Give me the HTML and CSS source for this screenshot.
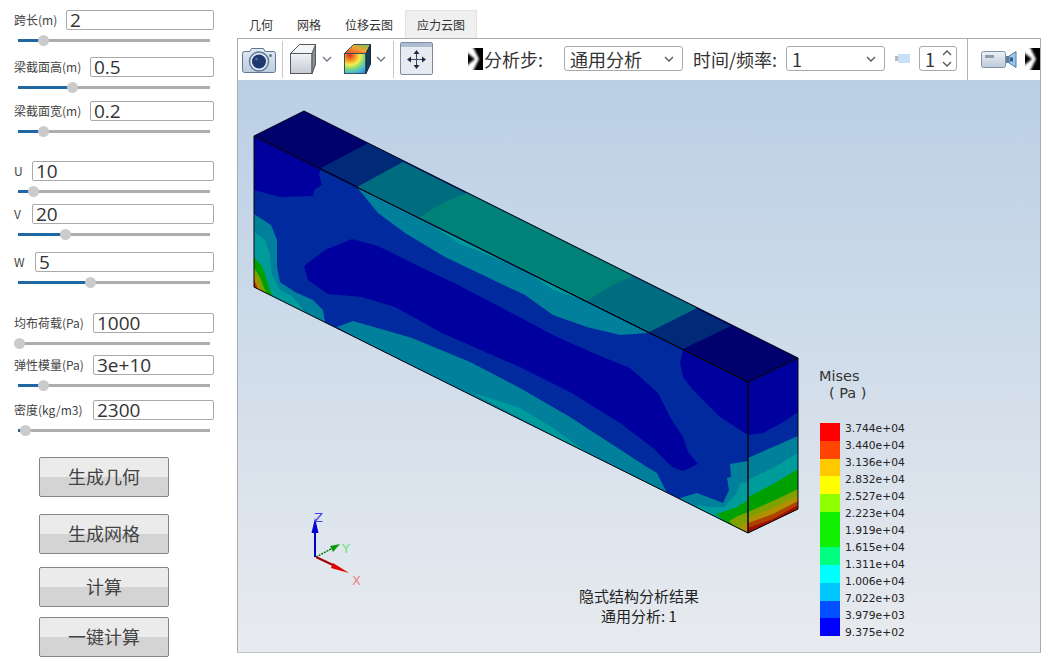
FILE: index.html
```html
<!DOCTYPE html>
<html lang="zh">
<head>
<meta charset="utf-8">
<title>隐式结构分析</title>
<link rel="stylesheet" href="styles.css">
</head>
<body>
<div class="app">
  <aside class="sidebar">
    <div class="param"><div class="row"><span class="label w52">跨长(m)</span><span class="input">2</span></div>
      <div class="slider"><i class="fill" style="width:24px"></i><i class="thumb"></i><i class="rest"></i></div></div>
    <div class="param mt10"><div class="row"><span class="label w76">梁截面高(m)</span><span class="input">0.5</span></div>
      <div class="slider"><i class="fill" style="width:53px"></i><i class="thumb"></i><i class="rest"></i></div></div>
    <div class="param mt7"><div class="row"><span class="label w76">梁截面宽(m)</span><span class="input">0.2</span></div>
      <div class="slider"><i class="fill" style="width:24px"></i><i class="thumb"></i><i class="rest"></i></div></div>
    <div class="param mt23"><div class="row"><span class="label w18">U</span><span class="input">10</span></div>
      <div class="slider"><i class="fill" style="width:14px"></i><i class="thumb"></i><i class="rest"></i></div></div>
    <div class="param mt6"><div class="row"><span class="label w18">V</span><span class="input">20</span></div>
      <div class="slider"><i class="fill" style="width:46px"></i><i class="thumb"></i><i class="rest"></i></div></div>
    <div class="param mt11"><div class="row"><span class="label w21">W</span><span class="input">5</span></div>
      <div class="slider"><i class="fill" style="width:71px"></i><i class="thumb"></i><i class="rest"></i></div></div>
    <div class="param mt24"><div class="row"><span class="label w79">均布荷载(Pa)</span><span class="input">1000</span></div>
      <div class="slider"><i class="fill" style="width:0"></i><i class="thumb"></i><i class="rest"></i></div></div>
    <div class="param mt5"><div class="row"><span class="label w79">弹性模量(Pa)</span><span class="input">3e+10</span></div>
      <div class="slider"><i class="fill" style="width:24px"></i><i class="thumb"></i><i class="rest"></i></div></div>
    <div class="param mt8"><div class="row"><span class="label w79">密度(kg/m3)</span><span class="input">2300</span></div>
      <div class="slider"><i class="fill" style="width:6px"></i><i class="thumb"></i><i class="rest"></i></div></div>
    <button class="btn first">生成几何</button>
    <button class="btn gap17">生成网格</button>
    <button class="btn gap13">计算</button>
    <button class="btn gap10">一键计算</button>
  </aside>

  <main class="content">
    <nav class="tabs">
      <span class="tab">几何</span>
      <span class="tab">网格</span>
      <span class="tab">位移云图</span>
      <span class="tab active">应力云图</span>
    </nav>
    <section class="panel">
      <div class="toolbar">
        <svg class="ic-camera" viewBox="0 0 34 30">
          <defs>
            <linearGradient id="camBody" x1="0" y1="0" x2="0" y2="1"><stop offset="0" stop-color="#e4eaf2"/><stop offset="1" stop-color="#bccbdd"/></linearGradient>
          </defs>
          <path d="M2.500 7.500H8l1.500-3h12l1.500 3h8.500a2 2 0 0 1 2 2v17a2 2 0 0 1-2 2H2.500a2 2 0 0 1-2-2v-17a2 2 0 0 1 2-2z" fill="url(#camBody)" stroke="#5d7898"/>
          <circle cx="17" cy="17.500" r="9.500" fill="#dfe8f2" stroke="#5f7b9c" stroke-width="1.500"/>
          <circle cx="17" cy="17.500" r="7" fill="#1d3a70"/>
          <circle cx="14.500" cy="15" r="1.500" fill="#4a6aa0"/>
          <circle cx="28.500" cy="11.500" r="1.500" fill="#5f7b9c"/>
        </svg>
        <span class="sep ml6"></span>
        <svg class="ic-cube" viewBox="0 0 26 30">
          <defs>
            <linearGradient id="cubeFront" x1="0" y1="0" x2="0" y2="1"><stop offset="0" stop-color="#f2f3f6"/><stop offset="1" stop-color="#c4c9d2"/></linearGradient>
          </defs>
          <path d="M0.500 9.500 9.500 0.500H25.500V20L22 29.500Z" fill="#f4f5f7" stroke="#55585f"/>
          <rect x="0.500" y="9.500" width="21.500" height="20" fill="url(#cubeFront)" stroke="#55585f"/>
          <path d="M22 9.500 25.500 0.500V20L22 29.500Z" fill="#8b8e94" stroke="#55585f"/>
        </svg>
        <svg class="chev ml6" viewBox="0 0 10 6"><path d="M1 1l4 4 4-4" fill="none" stroke="#6b7683" stroke-width="1.300"/></svg>
        <svg class="ic-contour ml12" viewBox="0 0 27 30">
          <defs>
            <radialGradient id="heat" cx="0.250" cy="0.100" r="1.050">
              <stop offset="0" stop-color="#e02a20"/><stop offset="0.250" stop-color="#f59a20"/><stop offset="0.450" stop-color="#f4ee50"/><stop offset="0.650" stop-color="#80d878"/><stop offset="0.850" stop-color="#40b8e0"/><stop offset="1" stop-color="#3090d8"/>
            </radialGradient>
            <linearGradient id="heatTop" x1="0" y1="1" x2="1" y2="0"><stop offset="0" stop-color="#e84030"/><stop offset="0.500" stop-color="#f0a030"/><stop offset="1" stop-color="#70c860"/></linearGradient>
          </defs>
          <path d="M0.500 9.500 9.500 0.500H26.500L22 9.500Z" fill="url(#heatTop)" stroke="#3a5058"/>
          <rect x="0.500" y="9.500" width="21.500" height="20" fill="url(#heat)" stroke="#3a5058"/>
          <path d="M22 9.500 26.500 0.500V20L22 29.500Z" fill="#12405a" stroke="#223"/>
        </svg>
        <svg class="chev ml5" viewBox="0 0 10 6"><path d="M1 1l4 4 4-4" fill="none" stroke="#6b7683" stroke-width="1.300"/></svg>
        <span class="sep ml7"></span>
        <svg class="ic-move ml6" viewBox="0 0 33 33">
          <rect x="0.500" y="0.500" width="32" height="32" rx="1.500" fill="#e6ebf2" stroke="#7d8ea3"/>
          <rect x="1" y="1" width="31" height="4" fill="#aebcd0"/>
          <path d="M16.500 9.500v16M8.500 17.500h16" stroke="#36475e" stroke-width="1"/>
          <path d="M16.500 8l3 4h-6zM16.500 27l-3-4h6zM7 17.500l4-3v6zM26 17.500l-4-3v6z" fill="#1d2c44"/>
        </svg>
        <svg class="ic-broken ml35" viewBox="0 0 15 22">
          <defs><filter id="soft" x="-30%" y="-30%" width="160%" height="160%"><feGaussianBlur stdDeviation="0.900"/></filter></defs>
          <rect width="15" height="22" fill="#000"/>
          <path d="M-3 -3H4L11 11 4 25H-3Z" fill="#fff" filter="url(#soft)"/>
          <path d="M-3 3 7 11-3 19Z" fill="#000" filter="url(#soft)"/>
        </svg>
        <span class="tool-label w61 ml1">分析步:</span>
        <div class="select w119 ml19"><span>通用分析</span><svg class="chev" viewBox="0 0 10 6"><path d="M1 1l4 4 4-4" fill="none" stroke="#555" stroke-width="1.300"/></svg></div>
        <span class="tool-label w85 ml10">时间/频率:</span>
        <div class="select w99 ml8"><span>1</span><svg class="chev" viewBox="0 0 10 6"><path d="M1 1l4 4 4-4" fill="none" stroke="#555" stroke-width="1.300"/></svg></div>
        <div class="mini ml10"><i class="mini-grip"></i><i class="mini-box"></i></div>
        <div class="spin ml9"><span>1</span>
          <div class="spin-arrows">
            <svg class="chev" viewBox="0 0 10 6"><path d="M1 5l4-4 4 4" fill="none" stroke="#555" stroke-width="1.300"/></svg>
            <svg class="chev" viewBox="0 0 10 6"><path d="M1 1l4 4 4-4" fill="none" stroke="#555" stroke-width="1.300"/></svg>
          </div>
        </div>
        <span class="sep sep-full ml10"></span>
        <svg class="ic-video ml13" viewBox="0 0 36 22">
          <defs><linearGradient id="vid" x1="0" y1="0" x2="0" y2="1"><stop offset="0" stop-color="#eef1f5"/><stop offset="1" stop-color="#bcc8d6"/></linearGradient></defs>
          <rect x="0.500" y="3.500" width="24" height="16" rx="2" fill="url(#vid)" stroke="#7c93ad"/>
          <rect x="4" y="7" width="9" height="3" fill="#8f9cad"/>
          <path d="M25 8h3v7h-3z" fill="#5c7d9c"/>
          <path d="M28 8 35 3.500V19.500L28 15Z" fill="#9cc6e8" stroke="#4f7da3"/>
          <path d="M29 9.500h3v4h-3z" fill="#2d5f86"/>
        </svg>
        <svg class="ic-broken ml8" viewBox="0 0 15 22">
          <rect width="15" height="22" fill="#000"/>
          <path d="M-3 -3H4L11 11 4 25H-3Z" fill="#fff" filter="url(#soft)"/>
          <path d="M-3 3 7 11-3 19Z" fill="#000" filter="url(#soft)"/>
        </svg>
      </div>

      <div class="viewport">
        <svg class="scene" viewBox="238 80 802 572">
          <defs>
            <clipPath id="frontFace"><polygon points="254,136 748,382 748,533 254,287"/></clipPath>
            <clipPath id="rightFace"><polygon points="748,382 798,358 798,509 748,533"/></clipPath>
          </defs>
          <!-- top face -->
          <polygon points="254,136 304,111 798,358 748,382" fill="#00006e"/>
          <polygon points="321,168 368,143 731,326 683,349" fill="#002a78"/>
          <polygon points="357,187 403,162 697,308 649,332" fill="#006c80"/>
          <path d="M420,217 Q445,200 467,193 L633,276 Q610,285 587,301 Z" fill="#008278"/>

          <!-- front face -->
          <g clip-path="url(#frontFace)">
            <rect x="250" y="130" width="500" height="410" fill="#002a9e"/>
            <polygon points="254,136 321,168 319,175 322,185 314,190 313,196 280,197 254,190" fill="#00009e"/>
            <polygon points="683,350 680,363 683,377 693,390 720,417 748,435 748,382" fill="#00009e"/>
            <polygon points="304,266 325,250 352,239 378,246 412,263 458,285 525,320 553,335 593,353 630,368 658,393 670,417 683,437 688,452 698,464 683,471 672,467 653,448 620,423 570,392 520,367 458,340 442,333 395,307 362,297 328,294 308,280" fill="#00009e"/>
            <polygon points="357,187 378,213 405,233 445,257 525,295 553,315 587,327 620,335 648,333" fill="#00809a"/>
            <polygon points="422,218 458,243 525,270 553,290 583,300" fill="#009c9c"/>
            <!-- lower edge bands -->
            <polygon points="337,327 353,321 412,338 470,362 520,388 570,417 613,445 647,467 657,473 667,493 500,420" fill="#00809a"/>
            <polygon points="470,392 520,408 553,428 593,457 620,470" fill="#009c9c"/>
            <!-- left end -->
            <polygon points="254,214 271,225 277,240 277,267 280,282 295,292 313,300 323,310 325,322 254,290" fill="#00809a"/>
            <polygon points="254,232 265,240 270,255 272,275 280,290 292,296 305,312 254,290" fill="#009c9c"/>
            <polygon points="254,257 262,266 267,280 270,290 275,300 254,290" fill="#00a000"/>
            <polygon points="254,268 260,277 264,288 268,296 254,290" fill="#80a000"/>
            <polygon points="254,274 258,282 261,290 254,290" fill="#b09000"/>
            <polygon points="254,279 257,286 259,290 254,290" fill="#b04000"/>
            <polygon points="254,283 256,288 254,290" fill="#901000"/>
            <!-- right end -->
            <polygon points="748,461 730,464 731,477 727,478 729,490 723,503 697,493 680,498 680,505 748,540" fill="#00809a"/>
            <polygon points="748,482 740,483 737,493 728,503 725,507 710,507 697,505 697,510 748,540" fill="#009c9c"/>
            <polygon points="748,500 737,507 723,512 716,514 748,540" fill="#00a000"/>
            <polygon points="748,512 738,516 729,521 748,540" fill="#80a000"/>
            <polygon points="748,522 740,526 748,540" fill="#b09000"/>
          </g>

          <!-- right face -->
          <g clip-path="url(#rightFace)">
            <rect x="745" y="355" width="56" height="180" fill="#00009e"/>
            <polygon points="748,435 763,433 780,424 798,412 798,540 748,540" fill="#002a9e"/>
            <polygon points="748,458 773,447 798,436 798,540 748,540" fill="#00809a"/>
            <polygon points="748,480 773,468 798,453 798,540 748,540" fill="#009c9c"/>
            <polygon points="748,497 773,484 798,469 798,540 748,540" fill="#00a000"/>
            <polygon points="748,512 773,501 798,489 798,540 748,540" fill="#80a000"/>
            <polygon points="748,518 773,508 798,496 798,540 748,540" fill="#b09000"/>
            <polygon points="748,523 773,514 798,501 798,540 748,540" fill="#b04000"/>
            <polygon points="748,528 773,519 798,505 798,540 748,540" fill="#a01000"/>
          </g>

          <!-- edges -->
          <g fill="none" stroke="#050510" stroke-width="1">
            <polygon points="254,136 304,111 798,358 748,382"/>
            <polygon points="254,136 748,382 748,533 254,287"/>
            <polygon points="748,382 798,358 798,509 748,533"/>
          </g>

          <!-- triad -->
          <g class="triad">
            <line x1="315" y1="557" x2="315" y2="530" stroke="#0000c8" stroke-width="2"/>
            <polygon points="315,518 311.500,533 318.500,533" fill="#0000d0"/>
            <line x1="316" y1="557" x2="331" y2="549" stroke="#0a7a0a" stroke-width="1.500" stroke-dasharray="2 1"/>
            <polygon points="340,544 330,546 333,552" fill="#109a10"/>
            <line x1="316" y1="557" x2="335" y2="566" stroke="#a00000" stroke-width="2"/>
            <polygon points="349,573 333,563 331,568" fill="#e00000"/>
            <text class="axis z" x="314" y="522">Z</text>
            <text class="axis y" x="342" y="553">Y</text>
            <text class="axis x" x="352" y="585">X</text>
          </g>
        </svg>

        <div class="legend">
          <div class="legend-title">Mises</div>
          <div class="legend-unit">( Pa )</div>
          <div class="legend-body">
            <div class="swatches">
              <i class="s1"></i><i class="s2"></i><i class="s3"></i><i class="s4"></i><i class="s5"></i><i class="s6"></i><i class="s6"></i><i class="s7"></i><i class="s8"></i><i class="s9"></i><i class="s10"></i><i class="s11"></i>
            </div>
            <div class="values">
              <span>3.744e+04</span><span>3.440e+04</span><span>3.136e+04</span><span>2.832e+04</span><span>2.527e+04</span><span>2.223e+04</span><span>1.919e+04</span><span>1.615e+04</span><span>1.311e+04</span><span>1.006e+04</span><span>7.022e+03</span><span>3.979e+03</span><span>9.375e+02</span>
            </div>
          </div>
        </div>

        <div class="caption">
          <div>隐式结构分析结果</div>
          <div>通用分析: 1</div>
        </div>
      </div>
    </section>
  </main>
</div>
</body>
</html>
```

FILE: styles.css
```css
* { box-sizing: border-box; }
html, body { margin: 0; height: 100%; background: #fff; }
body {
  font-family: "Noto Sans CJK SC", "Open Sans", sans-serif;
  color: #333;
  overflow: hidden;
}
.app { display: flex; width: 1048px; height: 666px; }

/* sidebar */
.sidebar {
  width: 237px;
  flex: none;
  padding: 10px 23px 0 14px;
  display: flex;
  flex-direction: column;
}
.param { display: flex; flex-direction: column; height: 37px; flex: none; }
.mt5 { margin-top: 5px; }
.mt6 { margin-top: 6px; }
.mt7 { margin-top: 7px; }
.mt8 { margin-top: 8px; }
.mt10 { margin-top: 10px; }
.mt11 { margin-top: 11px; }
.mt23 { margin-top: 23px; }
.mt24 { margin-top: 24px; }
.row { display: flex; align-items: center; height: 20px; }
.label { flex: none; font-size: 12px; line-height: 20px; color: #444; white-space: nowrap; }
.w18 { width: 18px; }
.w21 { width: 21px; }
.w52 { width: 52px; }
.w76 { width: 76px; }
.w79 { width: 79px; }
.input {
  flex: 1;
  height: 20px;
  border: 1px solid #a9a9a9;
  border-radius: 2px;
  background: #fff;
  font: 19px/18px "Open Sans", sans-serif;
  color: #333;
  padding-left: 3px;
  white-space: nowrap;
}
.slider {
  display: flex;
  align-items: center;
  height: 14px;
  margin: 3px 4px 0 4px;
}
.slider i { display: block; }
.fill { height: 3px; background: #1f67a5; flex: none; }
.thumb {
  width: 11px;
  height: 11px;
  margin: 0 -4px 0 -4px;
  border-radius: 50%;
  background: #cbcbcb;
  flex: none;
  position: relative;
}
.rest { flex: 1; height: 3px; background: #adadad; }
.btn {
  display: block;
  flex: none;
  width: 130px;
  height: 40px;
  margin-left: 25px;
  border: 1px solid #858585;
  border-radius: 2px;
  background: linear-gradient(#ebebeb 0, #ebebeb 51%, #d4d4d4 51%, #d4d4d4 100%);
  font: 18px/1 "Noto Sans CJK SC", sans-serif;
  color: #444;
  padding: 0 0 2px;
}
.first { margin-top: 20px; }
.gap17 { margin-top: 17px; }
.gap13 { margin-top: 13px; }
.gap10 { margin-top: 10px; }

/* right side */
.content { width: 804px; flex: none; padding-top: 10px; display: flex; flex-direction: column; }
.tabs { display: flex; height: 28px; flex: none; }
.tab {
  padding: 0 12px;
  font-size: 12px;
  line-height: 27px;
  color: #333;
  border: 1px solid transparent;
  border-width: 1px 0 0 0;
  white-space: nowrap;
}
.tab.active { background: #f0f0f0; border: 1px solid #e2e2e2; border-bottom: 0; padding: 0 11px; }
.panel {
  width: 804px;
  height: 615px;
  border: 1px solid #ababab;
  border-bottom-color: #c4c4c4;
  display: flex;
  flex-direction: column;
  background: #fff;
}
.toolbar { display: flex; align-items: center; height: 41px; flex: none; padding: 0 0 2px 4px; }
.sep { width: 1px; align-self: stretch; background: #c8c8c8; flex: none; margin-top: 2px; }
.sep-full { background: #b4b4b4; margin: 0 0 -2px; margin-left: 10px; }
.toolbar svg { flex: none; display: block; }
.ic-camera { width: 34px; height: 30px; }
.ic-cube { width: 26px; height: 30px; margin-left: 7px; }
.ic-contour { width: 27px; height: 30px; }
.ic-move { width: 33px; height: 33px; }
.ic-broken { width: 15px; height: 22px; }
.ic-video { width: 36px; height: 22px; }
.chev { width: 10px; height: 6px; }
.ml1 { margin-left: 1px; }
.ml5 { margin-left: 5px; }
.ml6 { margin-left: 6px; }
.ml7 { margin-left: 7px; }
.ml8 { margin-left: 8px; }
.ml9 { margin-left: 9px; }
.ml10 { margin-left: 10px; }
.ml12 { margin-left: 12px; }
.ml13 { margin-left: 13px; }
.ml19 { margin-left: 19px; }
.ml35 { margin-left: 35px; }
.tool-label { font-size: 18px; line-height: 24px; color: #333; white-space: nowrap; flex: none; }
.w61 { width: 61px; }
.w85 { width: 85px; }
.w99 { width: 99px; }
.w119 { width: 119px; }
.select, .spin {
  display: flex;
  align-items: center;
  justify-content: space-between;
  height: 25px;
  flex: none;
  border: 1px solid #a9a9a9;
  border-radius: 3px;
  background: #fff;
  font: 18px/1 "Noto Sans CJK SC", "Open Sans", sans-serif;
  color: #333;
  padding: 0 8px 0 5px;
}
.mini { display: flex; align-items: center; width: 15px; flex: none; }
.mini-grip { width: 3px; height: 5px; background: #b9b9b9; }
.mini-box { width: 12px; height: 9px; background: #c9e0fa; }
.spin { width: 38px; padding: 0 4px 0 5px; }
.spin-arrows { display: flex; flex-direction: column; gap: 5px; }

/* viewport */
.viewport {
  position: relative;
  flex: 1;
  background: linear-gradient(#bacfe5, #e8ebef);
  overflow: hidden;
}
.scene { position: absolute; left: 0; top: 0; width: 802px; height: 572px; display: block; }
.axis { font: 13px "DejaVu Sans", sans-serif; }
.axis.z { fill: #3b3bf0; }
.axis.y { fill: #6fe07a; }
.axis.x { fill: #ee8686; }
.legend {
  position: absolute;
  left: 581px;
  top: 288px;
  font-family: "DejaVu Sans", sans-serif;
  color: #222;
}
.legend-title { font-size: 14.500px; line-height: 17px; color: #333; }
.legend-unit { font-size: 14.500px; line-height: 17px; padding-left: 10px; color: #333; }
.legend-body { display: flex; margin-top: 21px; }
.swatches { width: 20px; height: 213px; display: flex; flex-direction: column; flex: none; margin-left: 1px; }
.swatches i { display: block; flex: 1; }
.s1 { background: #ff0000; }
.s2 { background: #ff4500; }
.s3 { background: #ffc800; }
.s4 { background: #ffff00; }
.s5 { background: #90ff00; }
.s6 { background: #10f000; }
.s7 { background: #00ff80; }
.s8 { background: #00ffff; }
.s9 { background: #00c8ff; }
.s10 { background: #0050ff; }
.s11 { background: #0000ff; }
.values {
  display: flex;
  flex-direction: column;
  margin-left: 5px;
  margin-top: -3px;
  font-size: 10.700px;
  line-height: 17px;
  white-space: nowrap;
}
.caption {
  position: absolute;
  left: 341px;
  top: 506px;
  width: 120px;
  text-align: center;
  font-size: 15px;
  line-height: 20px;
  color: #222;
}
```
